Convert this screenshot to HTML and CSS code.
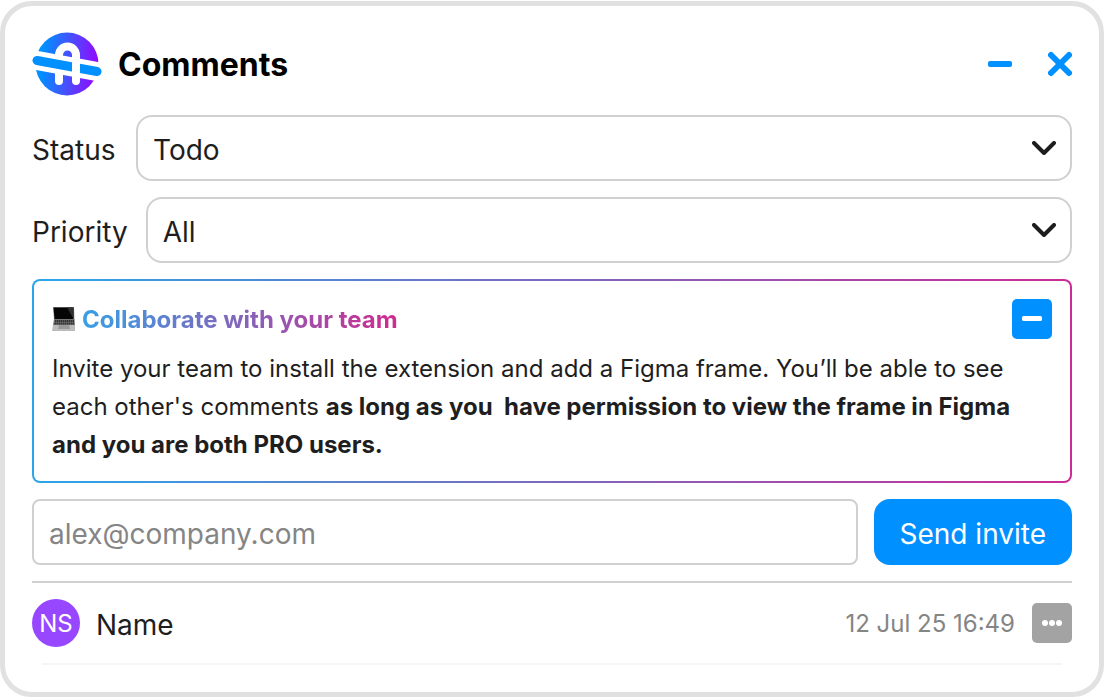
FILE: index.html
```
<!DOCTYPE html>
<html lang="en">
<head>
    <meta charset="UTF-8">
    <meta name="viewport" content="width=device-width, initial-scale=1.0">
    <title>Comments</title>
    <link rel="stylesheet" href="styles.css">
</head>
<body>

    <main class="panel">
        <header class="panel-header">
            <svg class="logo" viewBox="0 0 70 64" aria-hidden="true">
                <defs>
                    <linearGradient id="logo-gradient" x1="0" y1="0.45" x2="1" y2="0.55">
                        <stop offset="0.1" stop-color="#0090ff" />
                        <stop offset="1" stop-color="#9706ff" />
                    </linearGradient>
                </defs>
                <circle cx="35" cy="32" r="31.5" fill="url(#logo-gradient)" />
                <path d="M27 49V23a8.500 8.500 0 0 1 17 0V49" fill="none" stroke="#fff" stroke-width="8" stroke-linecap="round" />
                <path d="M-1 27.400L71 40.600" stroke="#fff" stroke-width="19" />
                <path d="M5 28.500L65 39.500" stroke="#0090ff" stroke-width="9" stroke-linecap="round" />
                <path d="M44 25V49" stroke="#fff" stroke-width="8" />
            </svg>
            <h1>Comments</h1>
            <button class="icon-button" type="button" aria-label="Minimize">
                <svg width="24" height="26" viewBox="0 0 24 26"><rect y="10" width="24" height="6" rx="2" fill="#0090ff" /></svg>
            </button>
            <button class="icon-button" type="button" aria-label="Close">
                <svg width="24" height="26" viewBox="0 0 24 26"><path d="M3 4L21 22M21 4L3 22" stroke="#0090ff" stroke-width="6" stroke-linecap="round" /></svg>
            </button>
        </header>

        <div class="filter">
            <label for="status">Status</label>
            <div class="select-box">
                <select id="status">
                    <option>Todo</option>
                    <option>Done</option>
                </select>
                <svg class="chevron" width="24" height="14" viewBox="0 0 24 14"><path d="M2 2L12 12L22 2" /></svg>
            </div>
        </div>

        <div class="filter">
            <label for="priority">Priority</label>
            <div class="select-box">
                <select id="priority">
                    <option>All</option>
                    <option>High</option>
                    <option>Low</option>
                </select>
                <svg class="chevron" width="24" height="14" viewBox="0 0 24 14"><path d="M2 2L12 12L22 2" /></svg>
            </div>
        </div>

        <section class="team-box">
            <div class="team-header">
                <svg class="laptop" width="24" height="24" viewBox="0 0 24 24" aria-hidden="true">
                    <path d="M1 0H22L22.500 13H2Z" fill="#999" />
                    <path d="M1.500 0.500H21.500V12H2.500Z" fill="#050505" />
                    <path d="M15 0.500H21.500V12Z" fill="#303030" />
                    <path d="M2 12H22.500L23 18H1Z" fill="#777" />
                    <path d="M3 14H22M2.500 16.500H22" stroke="#333" stroke-width="2" stroke-dasharray="1.500 0.500" />
                    <path d="M1 18H23V24H0Z" fill="#bbb" />
                    <path d="M7 18H17L18 22H6Z" fill="#999" />
                </svg>
                <h2>Collaborate with your team</h2>
                <button class="collapse-button" type="button" aria-label="Collapse">
                    <svg width="20" height="6" viewBox="0 0 20 6"><rect width="20" height="5" rx="1.500" fill="#fff" /></svg>
                </button>
            </div>
            <p>Invite your team to install the extension and add a Figma frame. You’ll be able to see each other's comments <strong>as long as you&nbsp; have permission to view the frame in Figma and you are both PRO users.</strong></p>
        </section>

        <form class="invite">
            <input type="email" placeholder="alex@company.com" aria-label="Email">
            <button type="button">Send invite</button>
        </form>

        <article class="comment">
            <span class="avatar">NS</span>
            <span class="name">Name</span>
            <time datetime="2025-07-12T16:49">12 Jul 25 16:49</time>
            <button class="more-button" type="button" aria-label="More">
                <svg width="20" height="6" viewBox="0 0 20 6" fill="#fff"><circle cx="3" cy="3" r="3" /><circle cx="10" cy="3" r="3" /><circle cx="17" cy="3" r="3" /></svg>
            </button>
        </article>
        <hr class="comment-line">
    </main>

</body>
</html>
```
FILE: styles.css
```
* {
    box-sizing: border-box;
}
body {
    font-family: Inter, "Liberation Sans", sans-serif;
    background-color: white;
    margin: 0;
    padding-top: 1px;
    color: #1e1e1e;
    font-size: 28px;
}
h1, h2, p {
    margin: 0;
}
button, input, select {
    font: inherit;
    color: inherit;
}
button {
    border: none;
    padding: 0;
    cursor: pointer;
}
svg {
    display: block;
}
.panel {
    display: flex;
    flex-direction: column;
    gap: 16px;
    padding: 26px 27px 27px;
    border: 5px solid #e1e1e1;
    border-radius: 32px;
    background-color: white;
}
.panel-header {
    display: flex;
    align-items: center;
    margin-bottom: 3px;
}
.logo {
    width: 70px;
    height: 64px;
}
h1 {
    flex: 1;
    margin-left: 16px;
    font-size: 32px;
    font-weight: 700;
    color: black;
}
.icon-button {
    background: none;
    margin-left: 36px;
}
.filter {
    display: flex;
    align-items: center;
    gap: 18px;
}
.filter label {
    min-width: 86px;
    padding-top: 3px;
}
.select-box {
    flex: 1;
    display: grid;
    align-items: center;
}
.select-box select, .chevron {
    grid-area: 1 / 1;
}
.select-box select {
    appearance: none;
    width: 100%;
    height: 66px;
    padding: 3px 15px 0;
    border: 2px solid #d0d0d0;
    border-radius: 16px;
    background-color: white;
}
.chevron {
    justify-self: end;
    margin-right: 16px;
    fill: none;
    stroke: #1e1e1e;
    stroke-width: 4;
    stroke-linecap: round;
    stroke-linejoin: round;
    pointer-events: none;
}
.team-box {
    padding: 18px 18px 17px;
    border: 2px solid transparent;
    border-radius: 8px;
    background: linear-gradient(white, white) padding-box,
        linear-gradient(90deg, #2ba6e9, #cc2c94) border-box;
}
.team-header {
    display: flex;
    align-items: center;
    margin-bottom: 11px;
}
h2 {
    margin-left: 6px;
    font-size: 24px;
    font-weight: 700;
    background: linear-gradient(90deg, #37a0e5, #d02a90);
    background-clip: text;
    color: transparent;
}
.collapse-button {
    display: grid;
    place-items: center;
    width: 40px;
    height: 40px;
    margin-left: auto;
    border-radius: 5px;
    background-color: #0090ff;
}
.team-box p {
    font-size: 24px;
    line-height: 38px;
}
.team-box strong {
    font-weight: 700;
}
.invite {
    display: flex;
    gap: 16px;
}
.invite input {
    flex: 1;
    min-width: 0;
    height: 66px;
    padding: 3px 15px 0;
    border: 2px solid #d0d0d0;
    border-radius: 8px;
}
.invite input::placeholder {
    color: #858585;
}
.invite button {
    padding: 3px 26px 0;
    border-radius: 16px;
    background-color: #0090ff;
    color: white;
}
.comment {
    display: flex;
    align-items: center;
    padding-top: 16px;
    border-top: 2px solid #d0d0d0;
}
.avatar {
    display: grid;
    place-items: center;
    width: 48px;
    height: 48px;
    border-radius: 50%;
    background-color: #9747ff;
    color: white;
    font-size: 24px;
}
.name {
    flex: 1;
    margin-left: 16px;
    padding-top: 3px;
}
time {
    color: #858585;
    font-size: 24px;
}
.more-button {
    display: grid;
    place-items: center;
    width: 40px;
    height: 40px;
    margin-left: 17px;
    border-radius: 5px;
    background-color: #a3a3a3;
}
.comment-line {
    width: calc(100% - 20px);
    height: 2px;
    margin: 0 auto;
    border: none;
    border-radius: 1px;
    background-color: #f6f6f6;
}
```
